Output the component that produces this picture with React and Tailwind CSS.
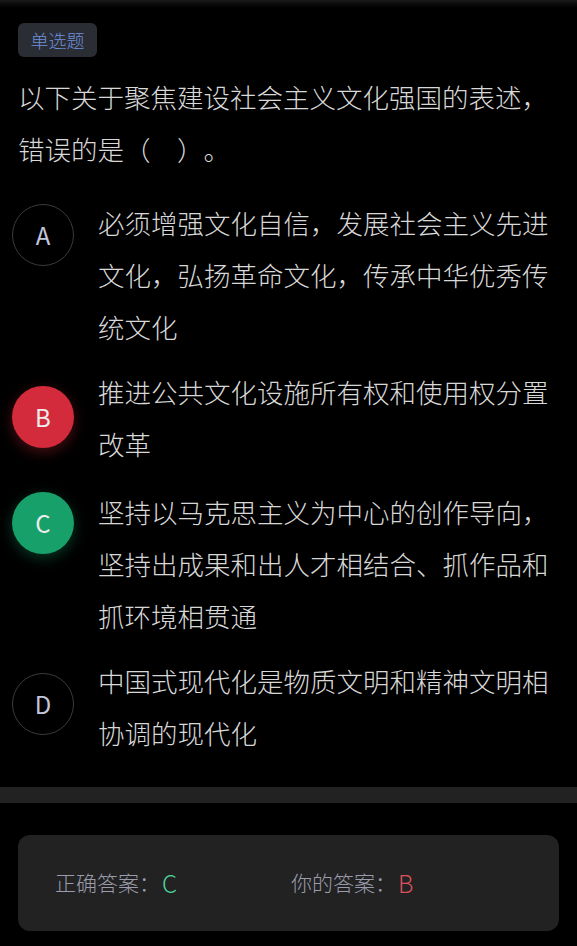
import React from 'react';

const options = [
  { key: 'A', text: '必须增强文化自信，发展社会主义先进文化，弘扬革命文化，传承中华优秀传统文化', state: 'idle', gap: 'mt-[22px]', circle: 'mt-[7px]' },
  { key: 'B', text: '推进公共文化设施所有权和使用权分置改革', state: 'wrong', gap: 'mt-[13px]', circle: 'mt-[20px]' },
  { key: 'C', text: '坚持以马克思主义为中心的创作导向，坚持出成果和出人才相结合、抓作品和抓环境相贯通', state: 'right', gap: 'mt-[16px]', circle: 'mt-[6px]' },
  { key: 'D', text: '中国式现代化是物质文明和精神文明相协调的现代化', state: 'idle', gap: 'mt-[13px]', circle: 'mt-[18px]' },
];

const circleStyles = {
  idle: 'border border-[#3a3a40] bg-black text-[#c3c6dc]',
  wrong: 'bg-[#d32a3c] text-[#ececec] shadow-[0_4px_14px_rgba(211,42,60,0.35)]',
  right: 'bg-[#18a06a] text-[#ececec] shadow-[0_4px_14px_rgba(24,160,106,0.35)]',
};

const App = () => {
  return (
    <div className="w-full min-h-[946px] bg-black font-['Noto_Sans_CJK_SC',sans-serif] font-light [text-spacing-trim:space-all]">
      {/* top fade */}
      <div className="h-3 bg-gradient-to-b from-[#1b1b1b] to-black" />

      <div className="px-[18px]">
        <div className="mt-[11px] flex h-[34px] w-[79px] items-center justify-center rounded-md bg-[#2a2d33] text-[18px] text-[#6f8fdc]">
          单选题
        </div>
        <p className="mt-[14px] text-[26.5px] leading-[52px] text-[#d8d8d8]">
          以下关于聚焦建设社会主义文化强国的表述，错误的是（　）。
        </p>
      </div>

      <div className="pl-[12px]">
        {options.map((o) => (
          <div key={o.key} className={`flex items-start ${o.gap}`}>
            <div
              className={`flex h-[62px] w-[62px] shrink-0 items-center justify-center rounded-full text-[24px] font-normal ${o.circle} ${circleStyles[o.state]}`}
            >
              {o.key}
            </div>
            <p className="ml-[24px] w-[456px] text-[26.5px] leading-[52px] text-[#d8d8d8]">{o.text}</p>
          </div>
        ))}
      </div>

      <div className="mt-[28px] h-4 bg-[#222222]" />

      <div className="mx-[18px] mt-[32px] flex h-[96px] items-center rounded-xl bg-[#222222] pl-[37px] text-[21px]">
        <div className="flex w-[236px] items-center">
          <span className="text-[#9a9cab]">正确答案：</span>
          <span className="ml-[2px] text-[24px] text-[#4fd19a]">C</span>
        </div>
        <div className="flex items-center">
          <span className="text-[#9a9cab]">你的答案：</span>
          <span className="ml-[2px] text-[24px] text-[#d9505e]">B</span>
        </div>
      </div>
    </div>
  );
};

export default App;
